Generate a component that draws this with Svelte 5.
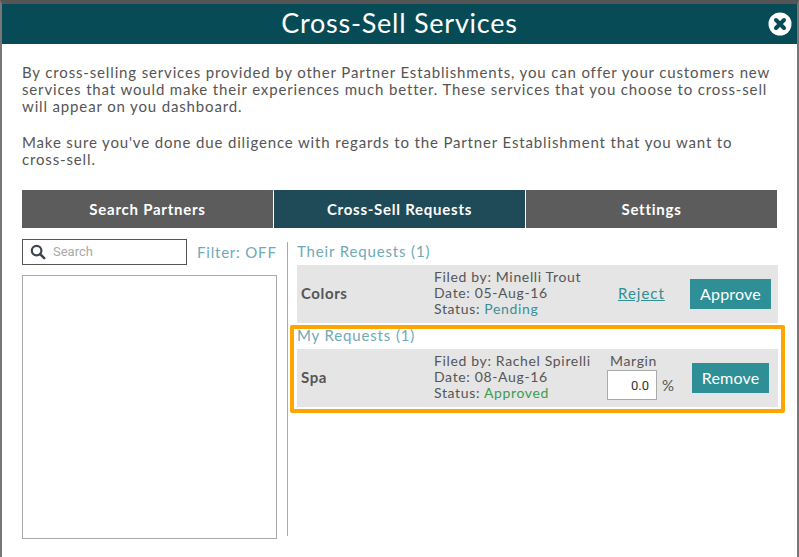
<script>
	const intro = 'By cross-selling services provided by other Partner Establishments, you can offer your customers new services that would make their experiences much better. These services that you choose to cross-sell will appear on you dashboard.';
	const note = "Make sure you've done due diligence with regards to the Partner Establishment that you want to cross-sell.";
	const tabs = ['Search Partners', 'Cross-Sell Requests', 'Settings'];
</script>

<div class="modal">
	<header class="head">
		<h1>Cross-Sell Services</h1>
		<button class="close" aria-label="Close">
			<svg viewBox="0 0 24 24" width="24" height="24">
				<circle cx="12" cy="12" r="11.5" fill="#fff" />
				<path d="M8 8l8 8M16 8l-8 8" stroke="#064b55" stroke-width="4" stroke-linecap="round" />
			</svg>
		</button>
	</header>

	<div class="body">
		<p class="text">{intro}</p>
		<p class="text second">{note}</p>

		<nav class="tabs">
			{#each tabs as tab, i}
				<div class="tab" class:active={i === 1}>{tab}</div>
			{/each}
		</nav>

		<div class="columns">
			<div class="left">
				<div class="tools">
					<div class="search">
						<svg viewBox="0 0 16 16" width="16" height="16">
							<circle cx="6.6" cy="6.6" r="4.8" fill="none" stroke="#3d4550" stroke-width="2.2" />
							<path d="M10.2 10.2l4 4" stroke="#3d4550" stroke-width="2.6" stroke-linecap="round" />
						</svg>
						<span class="placeholder">Search</span>
					</div>
					<span class="filter">Filter: OFF</span>
				</div>
				<div class="list"></div>
			</div>

			<div class="right">
				<h2>Their Requests (1)</h2>
				<div class="row">
					<strong>Colors</strong>
					<div class="meta">
						<div>Filed by: Minelli Trout</div>
						<div>Date: 05-Aug-16</div>
						<div>Status: <span class="pending">Pending</span></div>
					</div>
					<a class="reject" href="#reject">Reject</a>
					<button class="action approve">Approve</button>
				</div>

				<div class="mine">
					<h2>My Requests (1)</h2>
					<div class="row">
						<strong>Spa</strong>
						<div class="meta">
							<div>Filed by: Rachel Spirelli</div>
							<div>Date: 08-Aug-16</div>
							<div>Status: <span class="approved">Approved</span></div>
						</div>
						<div class="margin">
							<label for="margin">Margin</label>
							<div class="margin-input">
								<input id="margin" value="0.0" />
								<span>%</span>
							</div>
						</div>
						<button class="action remove">Remove</button>
					</div>
					<div class="highlight"></div>
				</div>
			</div>
		</div>
	</div>
</div>

<style>
	:global(body) {
		background: #fff;
		font-family: Lato, "Liberation Sans", sans-serif;
	}
	.modal {
		height: 557px;
		box-sizing: border-box;
		border: 2px solid #777;
		border-top: 4px solid #555;
		border-bottom: 0;
		overflow: hidden;
		color: #555;
	}
	.head {
		position: relative;
		height: 40px;
		box-sizing: border-box;
		padding-bottom: 3px;
		background: #064b55;
		display: flex;
		align-items: center;
		justify-content: center;
	}
	h1 {
		margin: 0;
		color: #fff;
		font-size: 27px;
		font-weight: 400;
		letter-spacing: 0.75px;
	}
	.close {
		position: absolute;
		right: 5px;
		top: 8px;
		padding: 0;
		border: 0;
		background: none;
		height: 24px;
	}
	.body {
		padding: 20px 20px 0;
	}
	.text {
		margin: 0;
		font-size: 15px;
		line-height: 17px;
		letter-spacing: 0.85px;
	}
	.second {
		margin-top: 19px;
	}
	.tabs {
		display: flex;
		gap: 1px;
		margin-top: 22px;
		width: 755px;
	}
	.tab {
		flex: 1;
		height: 38px;
		line-height: 38px;
		text-align: center;
		background: #5c5c5c;
		color: #fff;
		font-size: 15px;
		font-weight: 700;
		letter-spacing: 0.75px;
	}
	.tab.active {
		background: #1f4a57;
	}
	.columns {
		display: flex;
		margin-top: 11px;
	}
	.left {
		flex: none;
		width: 255px;
	}
	.tools {
		display: flex;
		align-items: center;
		gap: 10px;
	}
	.search {
		flex: none;
		width: 165px;
		height: 26px;
		box-sizing: border-box;
		border: 1px solid #555;
		display: flex;
		align-items: center;
		gap: 7px;
		padding-left: 7px;
		font-size: 13px;
		color: #aaa;
		font-family: Roboto, sans-serif;
	}
	.placeholder {
		margin-top: -2px;
	}
	.filter {
		font-size: 15px;
		letter-spacing: 0.8px;
		color: #6eaab5;
		white-space: nowrap;
		margin-top: -1px;
	}
	.list {
		margin-top: 10px;
		height: 264px;
		box-sizing: border-box;
		border: 1px solid #aaa;
	}
	.right {
		flex: none;
		margin: 3px 0 0 10px;
		padding-left: 9px;
		width: 481px;
		height: 294px;
		border-left: 1px solid #aaa;
	}
	h2 {
		margin: 0;
		height: 23px;
		font-size: 15px;
		line-height: 18px;
		font-weight: 400;
		letter-spacing: 0.85px;
		color: #6eaab5;
	}
	.row {
		display: flex;
		align-items: center;
		height: 58px;
		box-sizing: border-box;
		background: #e5e5e5;
		padding: 0 0 2px 4px;
		font-size: 14px;
		line-height: 16px;
		letter-spacing: 0.65px;
	}
	.row strong {
		flex: none;
		width: 133px;
		font-size: 15px;
		letter-spacing: 0.6px;
	}
	.meta {
		flex: none;
		width: 185px;
		white-space: nowrap;
	}
	.pending {
		color: #3a8f98;
	}
	.approved {
		color: #3f9a4f;
	}
	.reject {
		color: #2e8f96;
		font-size: 15px;
		letter-spacing: 1px;
		margin-left: -1px;
	}
	.action {
		height: 30px;
		border: 0;
		background: #2e8f96;
		color: #fff;
		font-family: inherit;
		font-size: 16px;
		letter-spacing: 0.2px;
		padding: 0 0 2px;
		margin-top: 2px;
	}
	.approve {
		width: 81px;
		margin-left: auto;
		margin-right: 7px;
	}
	.remove {
		width: 77px;
	}
	.mine {
		position: relative;
		margin-top: 3px;
	}
	.margin {
		flex: none;
		width: 85px;
		margin: -1px 0 0 -12px;
		display: flex;
		flex-direction: column;
		align-items: flex-start;
	}
	.margin label {
		margin: 0 0 1px 3px;
	}
	.margin-input {
		display: flex;
		align-items: center;
		gap: 5px;
		font-size: 15px;
	}
	.margin input {
		width: 50px;
		height: 30px;
		box-sizing: border-box;
		border: 1px solid #aaa;
		text-align: right;
		padding: 0 7px 0 0;
		font: 13px Roboto, sans-serif;
		color: #333;
	}
	.highlight {
		position: absolute;
		left: -7px;
		top: -1px;
		width: 495px;
		height: 88px;
		box-sizing: border-box;
		border: 4px solid #ffa500;
		border-radius: 2px;
		pointer-events: none;
	}
</style>
